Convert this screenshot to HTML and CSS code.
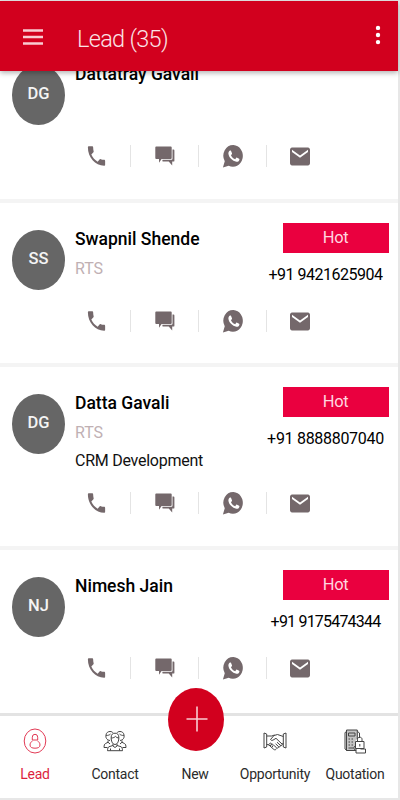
FILE: index.html
```html
<!DOCTYPE html>
<html lang="en">
<head>
    <meta charset="UTF-8">
    <meta name="viewport" content="width=device-width, initial-scale=1.0">
    <title>Lead</title>
    <link rel="stylesheet" href="styles.css">
</head>
<body>
    <!-- Shared action icons -->
    <svg class="icon-defs">
        <symbol id="icon-call" viewBox="0 0 24 24" preserveAspectRatio="none">
            <path d="M20 15.500c-1.200 0-2.500-.2-3.600-.6-.3-.1-.7 0-1 .2l-2.200 2.200c-2.800-1.400-5.100-3.800-6.600-6.600l2.200-2.200c.3-.3.4-.7.2-1C8.700 6.500 8.500 5.200 8.500 4c0-.5-.5-1-1-1H4c-.5 0-1 .5-1 1 0 9.400 7.600 17 17 17 .5 0 1-.5 1-1v-3.500c0-.5-.5-1-1-1z"/>
        </symbol>
        <symbol id="icon-chat" viewBox="0 0 20 20" preserveAspectRatio="none">
            <path d="M1.200 .5h14.600q.9 0 .9.900v10.700q0 .9-.9.900H6.600L4 16.800V13H1.200q-.9 0-.9-.9V1.400q0-.9.9-.9z"/>
            <path d="M17.500 3.500h1q.9 0 .9.900v10.300q0 .9-.9.900h-1.300V19.500l-3.500-3.900H8.300q-.9 0-.9-.9v-1h9.200q.9 0 .9-.9z"/>
        </symbol>
        <symbol id="icon-whatsapp" viewBox="0 0 24 24" preserveAspectRatio="none">
            <path d="M12.500 1A10.800 10.800 0 0 0 3 17.300L1 23.500l6.300-1.700A10.900 10.900 0 1 0 12.500 1z"/>
            <path class="cutout" d="M8.300 6.700c.4-.4 1.300-.4 1.600.2l1 2.300c.2.500-.1 1-.9 1.800-.2.200-.2.400 0 .8.900 1.500 2.100 2.600 3.800 3.300.4.200.600.100.8-.1l1-1.200c.3-.3.5-.3.9-.1l2.200 1.100c.4.200.4.500.2 1.100-.4 1.400-2 2-3.200 1.800-4.300-.7-8.300-4.500-8.700-8-.1-1.200.5-2.300 1.300-3z"/>
        </symbol>
        <symbol id="icon-mail" viewBox="0 0 24 24" preserveAspectRatio="none">
            <path d="M20 4H4c-1.100 0-2 .9-2 2v12c0 1.100.9 2 2 2h16c1.100 0 2-.9 2-2V6c0-1.100-.9-2-2-2zm0 4l-8 5-8-5V6l8 5 8-5v2z"/>
        </symbol>
    </svg>

    <div class="app">
        <header class="toolbar">
            <svg class="menu" viewBox="0 0 20 16">
                <path d="M0 1.500h20M0 8h20M0 14.500h20"/>
            </svg>
            <h1>Lead (35)</h1>
            <svg class="more" viewBox="0 0 6 20">
                <circle cx="3" cy="2.900" r="2.200"/>
                <circle cx="3" cy="10" r="2.200"/>
                <circle cx="3" cy="17.100" r="2.200"/>
            </svg>
        </header>

        <main class="list">
            <section class="card scrolled">
                <div class="avatar">DG</div>
                <div class="info">
                    <h2>Dattatray Gavali</h2>
                </div>
                <div class="actions">
                    <span><svg class="call"><use href="#icon-call"/></svg></span>
                    <span><svg class="chat"><use href="#icon-chat"/></svg></span>
                    <span><svg class="whatsapp"><use href="#icon-whatsapp"/></svg></span>
                    <span><svg class="mail"><use href="#icon-mail"/></svg></span>
                </div>
            </section>

            <section class="card">
                <div class="avatar">SS</div>
                <div class="info">
                    <h2>Swapnil Shende</h2>
                    <p class="company">RTS</p>
                </div>
                <div class="status">
                    <div class="badge">Hot</div>
                    <p class="phone">+91 9421625904</p>
                </div>
                <div class="actions">
                    <span><svg class="call"><use href="#icon-call"/></svg></span>
                    <span><svg class="chat"><use href="#icon-chat"/></svg></span>
                    <span><svg class="whatsapp"><use href="#icon-whatsapp"/></svg></span>
                    <span><svg class="mail"><use href="#icon-mail"/></svg></span>
                </div>
            </section>

            <section class="card tall">
                <div class="avatar">DG</div>
                <div class="info">
                    <h2>Datta Gavali</h2>
                    <p class="company">RTS</p>
                    <p class="product">CRM Development</p>
                </div>
                <div class="status">
                    <div class="badge">Hot</div>
                    <p class="phone wide">+91 8888807040</p>
                </div>
                <div class="actions">
                    <span><svg class="call"><use href="#icon-call"/></svg></span>
                    <span><svg class="chat"><use href="#icon-chat"/></svg></span>
                    <span><svg class="whatsapp"><use href="#icon-whatsapp"/></svg></span>
                    <span><svg class="mail"><use href="#icon-mail"/></svg></span>
                </div>
            </section>

            <section class="card last">
                <div class="avatar">NJ</div>
                <div class="info">
                    <h2>Nimesh Jain</h2>
                </div>
                <div class="status">
                    <div class="badge">Hot</div>
                    <p class="phone narrow">+91 9175474344</p>
                </div>
                <div class="actions">
                    <span><svg class="call"><use href="#icon-call"/></svg></span>
                    <span><svg class="chat"><use href="#icon-chat"/></svg></span>
                    <span><svg class="whatsapp"><use href="#icon-whatsapp"/></svg></span>
                    <span><svg class="mail"><use href="#icon-mail"/></svg></span>
                </div>
            </section>
        </main>

        <nav class="tabs">
            <a class="tab active">
                <svg viewBox="0 0 24 26">
                    <ellipse cx="12" cy="13" rx="10.800" ry="12"/>
                    <path d="M9.300 12V9.200a2.700 2.900 0 0 1 5.400 0V12M9.300 12h5.400"/>
                    <path d="M9.500 13C8 13.700 7 15.300 7 17c0 2.300 2 3.200 5 3.200s5-.9 5-3.200c0-1.700-1-3.300-2.500-4"/>
                </svg>
                <span>Lead</span>
            </a>
            <a class="tab">
                <svg viewBox="0 0 24 26">
                    <path d="M7 12.500C3.500 12 2.500 9.500 3 7c.3-2.500 2.200-3.500 4-3.500 1.500 0 2.500.5 3 1.300M3.200 7.500C5 7.500 6.500 7 7.500 6M17 12.500c3.500-.5 4.500-3 4-5.500-.3-2.500-2.200-3.500-4-3.500-1.500 0-2.500.5-3 1.300M20.800 7.500C19 7.500 17.500 7 16.500 6"/>
                    <path d="M8.200 11V9c0-2.500 1.500-3.800 3.800-3.800S15.800 6.500 15.800 9v2M8.200 10c2 0 3.500-.7 4.300-1.600.8 1 1.800 1.500 3.300 1.600M8.200 11c.2 3 1.800 5.500 3.800 5.500s3.600-2.500 3.800-5.500"/>
                    <path d="M10 16v2l2 1.500 2-1.500v-2M10 17.500l-4 1.200c-1 .5-1.500 2-1.500 4h15c0-2-.5-3.500-1.500-4l-4-1.200M5 12.500v1.800l-2.500 1.200C1.500 16 1 17.500 1 19.500h3.500M19 12.500v1.800l2.500 1.200c1 .5 1.500 2 1.500 4h-3.500M7.500 20.500v2M16.500 20.500v2M5 14.200l2 1.800M19 14.200 17 16"/>
                </svg>
                <span>Contact</span>
            </a>
            <a class="tab">
                <span>New</span>
            </a>
            <a class="tab">
                <svg viewBox="0 0 24 26">
                    <path d="M1 5l2.700 1v13L1 20zM23 5l-2.700 1v13l2.700 1z"/>
                    <path d="M3.700 8h5l2.800-1M20.300 8.500 14.500 6.500 11 7.500 7.500 11.500c.8 1.300 2.300 1 3.500 0l2-1.200L19 16c.8 1-.6 2.200-1.600 1.300L14 14.200M17.400 17.300c.5 1-.8 2.100-1.800 1.300l-3-2.800M15.600 18.700c.2 1-1 1.900-2 1.100l-2.500-2.300M3.700 16.500l2 .3 5 4.500c1.200 1 2.300.5 2.700-.8M5.200 17l1.900-1.700c.9-.6 1.900.4 1.100 1.300l-1 1.300 1.700-1.500c.9-.6 1.900.4 1.100 1.300l-1 1.500M19 16l1.300-.5"/>
                </svg>
                <span>Opportunity</span>
            </a>
            <a class="tab">
                <svg viewBox="0 0 24 26">
                    <path class="shade" d="M3.500 2h10.800v9l-2 2v9.500H3.500z"/>
                    <path d="M4 3.500 2 4.500V21l2 1.500M3.500 2h10.800v9M3.500 2v20.500h9.500M5.500 5h6.500v3H5.500zM5.500 11h1.500M8.500 11h1.500M5.500 14h1.500M8.500 14h1.500M5.500 17h1.500M8.500 17h1.500M5.500 20h4.500M14.500 3.500l2 1.500v5"/>
                    <path d="M12.500 13.500h8.500v7h-8.500zM14.500 13.500v-2.300c0-2.700 4.500-2.700 4.500 0v2.300M16.800 16v2.500M13 20.500v4.500h9.500v-4h-5M12 18l-1.500 2 2.500 3"/>
                </svg>
                <span>Quotation</span>
            </a>
            <button class="fab">
                <svg viewBox="0 0 24 26"><path d="M12 .5v25M1.500 13h21"/></svg>
            </button>
        </nav>
    </div>
</body>
</html>
```

FILE: styles.css
```css
* {
    box-sizing: border-box;
}
body {
    margin: 0;
    background-color: #e7e7e7;
    font-family: Roboto, sans-serif;
    color: #111;
}
h1, h2, p {
    margin: 0;
    white-space: nowrap;
}
.icon-defs {
    display: none;
}
.app {
    display: flex;
    flex-direction: column;
    width: 397.5px;
    height: 798px;
    padding-top: 1px;
}

/* Toolbar */
.toolbar {
    position: relative;
    z-index: 1;
    display: flex;
    align-items: center;
    height: 70px;
    padding: 2px 17px 0 23px;
    background-color: #d2001e;
    box-shadow: 0 2px 5px rgba(0, 0, 0, 0.3);
}
.toolbar h1 {
    flex: 1;
    margin: 3px 0 0 34px;
    color: #fbe3e6;
    font-size: 23.5px;
    font-weight: 300;
    letter-spacing: -0.7px;
}
.menu {
    width: 20px;
    height: 16px;
    margin-top: -1px;
    stroke: #f9ccd2;
    stroke-width: 2.4;
}
.more {
    width: 6px;
    height: 20px;
    margin-top: -5px;
    fill: #fff;
}

/* Lead list */
.list {
    height: 642px;
    overflow: hidden;
    background-color: #fff;
}
.card {
    display: grid;
    grid-template-columns: 53px 1fr 122px;
    grid-template-rows: 104px 1fr;
    column-gap: 10px;
    height: 164px;
    padding: 0 9px 0 12px;
    border-bottom: 4px solid #f4f4f4;
}
.scrolled {
    height: 165px;
    margin-top: -33px;
}
.tall {
    height: 183px;
    grid-template-rows: 122px 1fr;
}
.last {
    height: 170px;
}
.avatar {
    display: flex;
    align-items: center;
    justify-content: center;
    width: 53px;
    height: 60px;
    margin-top: 26.5px;
    padding-bottom: 2px;
    border-radius: 50%;
    background-color: #666;
    color: #f4f4f4;
    font-size: 16.5px;
    font-weight: 500;
}
.info {
    padding-top: 25px;
}
.info h2 {
    color: #000;
    font-size: 17.5px;
    font-weight: 500;
    line-height: 22px;
}
.company {
    margin-top: 9px;
    color: #c0b0b3;
    font-size: 16px;
    line-height: 20px;
    letter-spacing: -0.1px;
}
.product {
    margin-top: 8px;
    font-size: 16px;
    line-height: 20px;
    letter-spacing: -0.25px;
}
.status {
    display: flex;
    flex-direction: column;
    align-items: center;
    padding-top: 20px;
}
.badge {
    align-self: flex-end;
    width: 106px;
    height: 30px;
    background-color: #ea003f;
    color: #ffd5df;
    font-size: 16.5px;
    line-height: 30px;
    letter-spacing: -0.3px;
    text-align: center;
}
.phone {
    margin: 12px 4px 0 0;
    color: #000;
    font-size: 16px;
    line-height: 20px;
    letter-spacing: -0.5px;
}
.wide {
    letter-spacing: -0.3px;
}
.narrow {
    letter-spacing: -0.8px;
}
.actions {
    grid-column: 1 / -1;
    display: flex;
    height: 22px;
    margin: 3px 0 0 51px;
}
.actions span {
    display: flex;
    align-items: center;
    justify-content: center;
    width: 68px;
    border-right: 1.5px solid #e4e4e4;
}
.actions span:last-child {
    padding-right: 2px;
    border-right: none;
}
.actions svg {
    flex: none;
    fill: #74686b;
}
.cutout {
    fill: #fff;
}
.call {
    width: 23px;
    height: 26px;
}
.chat {
    width: 20px;
    height: 20px;
}
.whatsapp {
    width: 22px;
    height: 24px;
}
.mail {
    width: 24px;
    height: 27px;
}

/* Bottom tabs */
.tabs {
    position: relative;
    z-index: 1;
    display: flex;
    flex: 1;
    border-top: 3px solid #e3e3e3;
    background-color: #fff;
}
.tab {
    display: flex;
    flex: none;
    flex-direction: column;
    align-items: center;
    justify-content: flex-end;
    width: 80px;
    padding-bottom: 15px;
    color: #2b2b2b;
    font-size: 14px;
    line-height: 18px;
    letter-spacing: -0.25px;
}
.tab:first-child {
    width: 75px;
    padding-right: 5px;
}
.tab svg {
    width: 24px;
    height: 26px;
    margin-bottom: 11px;
    fill: none;
    stroke: #444;
    stroke-width: 1;
}
.tab .shade {
    fill: #c4c4c4;
    stroke: none;
}
.tab.active {
    color: #dc1f3d;
}
.tab.active svg {
    stroke: #e23a55;
}
.fab {
    position: absolute;
    left: 168px;
    top: -28px;
    display: flex;
    align-items: center;
    justify-content: center;
    width: 56px;
    height: 63px;
    padding: 0 0 2px 2px;
    border: none;
    border-radius: 50%;
    background-color: #d2001e;
}
.fab svg {
    width: 24px;
    height: 26px;
    stroke: #f9ccd2;
    stroke-width: 1.6;
}
```
